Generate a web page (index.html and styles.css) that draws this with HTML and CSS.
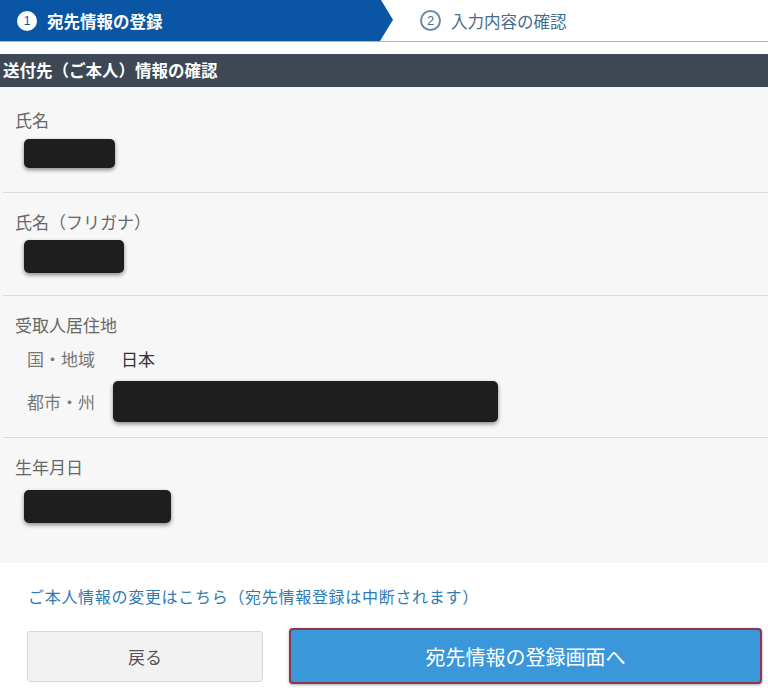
FILE: index.html
```html
<!DOCTYPE html>
<html lang="ja">
<head>
<meta charset="utf-8">
<title>送付先（ご本人）情報の確認</title>
<link rel="stylesheet" href="styles.css">
</head>
<body>
<div class="steps">
  <div class="step step-active">
    <span class="num num-active">1</span>
    <span class="step-text">宛先情報の登録</span>
  </div>
  <div class="step step-next">
    <span class="num num-next">2</span>
    <span class="step-text">入力内容の確認</span>
  </div>
</div>

<h2 class="section-title">送付先（ご本人）情報の確認</h2>

<div class="panel">
  <div class="field f1">
    <div class="label">氏名</div>
    <div class="redact r-name"></div>
  </div>
  <div class="field f2">
    <div class="label">氏名（フリガナ）</div>
    <div class="redact r-kana"></div>
  </div>
  <div class="field f3">
    <div class="label">受取人居住地</div>
    <div class="addr-row row-country">
      <span class="sub-label">国・地域</span>
      <span class="sub-value">日本</span>
    </div>
    <div class="addr-row row-city">
      <span class="sub-label">都市・州</span>
      <div class="redact r-city"></div>
    </div>
  </div>
  <div class="field f4">
    <div class="label">生年月日</div>
    <div class="redact r-birth"></div>
  </div>
</div>

<p class="note"><a class="link" href="#">ご本人情報の変更はこちら（宛先情報登録は中断されます）</a></p>

<div class="actions">
  <button class="btn btn-back" type="button">戻る</button>
  <button class="btn btn-primary" type="button">宛先情報の登録画面へ</button>
</div>
</body>
</html>
```

FILE: styles.css
```css
* { box-sizing: border-box; }

body {
  margin: 0;
  background: #ffffff;
  font-family: "Noto Sans CJK JP", "Noto Sans", "Liberation Sans", sans-serif;
  color: #555;
  width: 768px;
  height: 693px;
  overflow: hidden;
}

.steps {
  display: flex;
  height: 42px;
  border-bottom: 1px solid #9db6ca;
}

.step {
  display: flex;
  align-items: center;
  height: 41px;
}

.step-active {
  width: 393px;
  background: #0b56a4;
  clip-path: polygon(0 0, 381px 0, 393px 48%, 380px 100%, 0 100%);
  padding-left: 17px;
}

.step-next {
  flex: 1;
  padding-left: 27px;
}

.num {
  display: inline-flex;
  align-items: center;
  justify-content: center;
  width: 20px;
  height: 20px;
  border-radius: 50%;
  font-family: "Liberation Sans", sans-serif;
  font-size: 12px;
  margin-right: 10px;
}

.num-active {
  background: #ffffff;
  color: #0b56a4;
}

.num-next {
  width: 21px;
  height: 21px;
  border: 2px solid #6d8aa3;
  color: #4d6f8e;
  font-size: 13px;
  margin-right: 10px;
}

.step-text {
  font-size: 16.5px;
  line-height: 22px;
}

.step-active .step-text {
  color: #ffffff;
  font-weight: bold;
}

.step-next .step-text {
  color: #436d91;
}

.section-title {
  margin: 12px 0 0;
  height: 33px;
  background: #3d4854;
  color: #ffffff;
  font-size: 16.5px;
  font-weight: bold;
  line-height: 33px;
  padding-left: 3px;
}

.panel {
  background: #f7f7f7;
}

.field {
  margin-left: 3px;
  padding: 19px 15px 22px 12px;
  border-bottom: 1px solid #dcdcdc;
}

.f1 { padding-top: 23px; padding-bottom: 24px; }
.f3 { padding-bottom: 15px; }
.f4 { padding-bottom: 40px; border-bottom: none; }

.label {
  font-size: 17px;
  line-height: 20px;
  color: #676767;
}

.redact {
  background: #1e1e1e;
  border-radius: 5px;
  box-shadow: 0 2px 4px rgba(0, 0, 0, 0.45);
}

.r-name { width: 91px; height: 29px; margin: 9px 0 0 9px; }
.r-kana { width: 100px; height: 33px; margin: 8px 0 0 9px; }
.r-birth { width: 147px; height: 33px; margin: 13px 0 0 9px; }
.r-city { width: 385px; height: 41px; }

.addr-row {
  display: flex;
  align-items: center;
  padding-left: 12px;
}

.row-country {
  margin-top: 12px;
  height: 24px;
}

.row-city {
  margin-top: 10px;
}

.sub-label {
  font-size: 17px;
  line-height: 24px;
  color: #777;
  width: 94px;
}

.row-city .sub-label { width: 86px; }

.sub-value {
  font-size: 17px;
  line-height: 24px;
  color: #333;
}

.note {
  margin: 22px 0 0 28px;
  font-size: 16px;
  line-height: 22px;
  letter-spacing: 0.7px;
}

.link {
  color: #2d7bb3;
  text-decoration: none;
}

.actions {
  display: flex;
  align-items: center;
  gap: 26px;
  padding-left: 27px;
  margin-top: 21px;
}

.btn {
  font-family: "Noto Sans CJK JP", "Noto Sans", sans-serif;
  cursor: pointer;
}

.btn-back {
  width: 236px;
  height: 51px;
  background: #f2f2f2;
  border: 1px solid #d6d6d6;
  border-radius: 3px;
  color: #555;
  font-size: 17px;
}

.btn-primary {
  width: 473px;
  height: 56px;
  background: #3a97d9;
  border: 2px solid #8e3550;
  border-radius: 4px;
  color: #ffffff;
  font-size: 20px;
  box-shadow: 0 1px 3px rgba(0, 0, 0, 0.35);
}
```
